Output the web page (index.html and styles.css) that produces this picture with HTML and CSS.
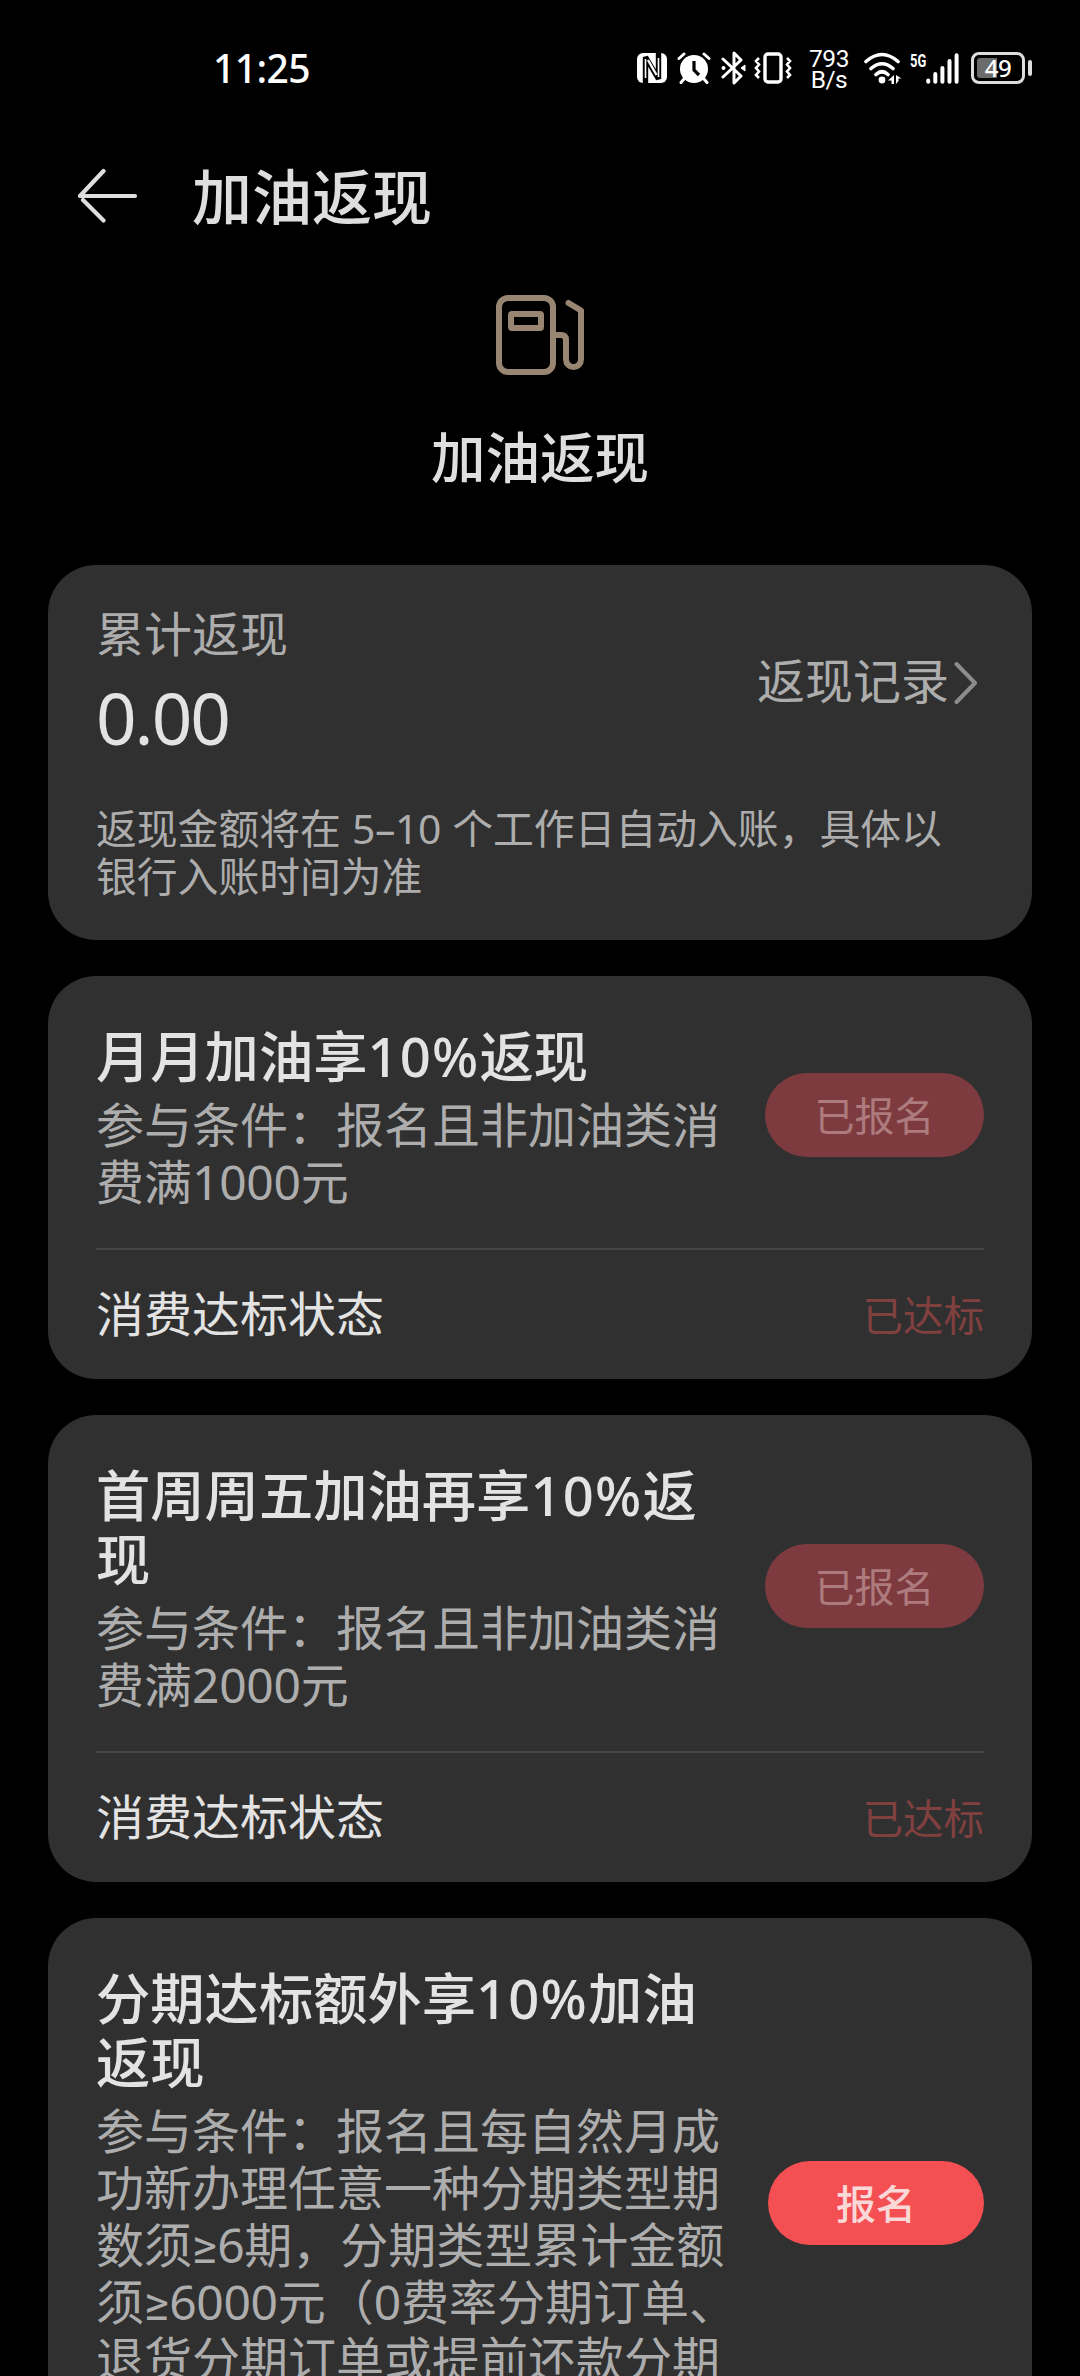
FILE: index.html
```html
<!DOCTYPE html>
<html lang="zh-CN">
<head>
<meta charset="utf-8">
<title>加油返现</title>
<link rel="stylesheet" href="styles.css">
</head>
<body>
<div class="screen">
  <div class="statusbar">
    <span class="clock">11:25</span>
    <div class="indicators">
      <svg class="nfc" width="30" height="32" viewBox="0 0 30 32"><rect x="0" y="1" width="30" height="30" rx="6" fill="#fff"/><path d="M8.500 31V5L21.500 27V1" fill="none" stroke="#000" stroke-width="5.400" stroke-linejoin="bevel"/><path d="M11 8L19.500 23" fill="none" stroke="#fff" stroke-width="2.400"/><path d="M8.500 26V7M21.500 25V6" stroke="#fff" stroke-width="1.600"/></svg>
      <svg class="alarm" width="34" height="32" viewBox="0 0 34 32"><circle cx="17" cy="17" r="14" fill="#fff"/><path d="M2 6.500L7 2M32 6.500L27 2M7 27L4 30.500M27 27L30 30.500" stroke="#fff" stroke-width="3" stroke-linecap="round"/><path d="M17 9v9l5 5" fill="none" stroke="#000" stroke-width="3.200"/></svg>
      <svg class="bluetooth" width="25" height="34" viewBox="0 0 25 34"><path d="M2 8l18 17-7 7V2l7 7L2 26" fill="none" stroke="#fff" stroke-width="3" stroke-linejoin="round" stroke-linecap="round"/><path d="M20 17l4-3v6z" fill="#fff" stroke="#fff"/><circle cx="2.500" cy="17" r="2" fill="#fff"/></svg>
      <svg class="vibrate" width="38" height="32" viewBox="0 0 38 32"><rect x="11" y="2" width="16" height="28" rx="3" fill="none" stroke="#fff" stroke-width="3.400"/><path d="M5 6L2 9l3 3.500-3 3.500 3 3.500-3 3.500 3 3M33 6l3 3-3 3.500 3 3.500-3 3.500 3 3.500-3 3" fill="none" stroke="#fff" stroke-width="2.600"/></svg>
      <span class="rate">793<br>B/s</span>
      <svg class="wifi" width="38" height="32" viewBox="0 0 38 32"><path d="M2 9.500Q18 -4.500 34 9.500M7 16.500Q18 7 29 16.500M12 22.500Q18 17 24 22.500" fill="none" stroke="#fff" stroke-width="3.600" stroke-linecap="round"/><circle cx="18" cy="28" r="3.400" fill="#fff"/><path d="M30 23v9h-2.500v-3.500H24zM32 32v-9l5.500 3.500H34.500V29z" fill="#fff"/></svg>
      <div class="cell">
        <span class="gen">5G</span>
        <svg class="bars" width="33" height="31" viewBox="0 0 33 31"><path d="M2.200 27.500v1.300M9.300 21v7.800M16.400 15v13.800M23.500 8v20.800M30.600 2.200v26.600" stroke="#fff" stroke-width="4" stroke-linecap="round"/></svg>
      </div>
      <div class="battery"><div class="case"><div class="level"></div><span class="percent">49</span></div><div class="tip"></div></div>
    </div>
  </div>

  <header class="titlebar">
    <svg class="back" width="60" height="56" viewBox="0 0 60 56"><path d="M57 28H2L25.500 3M5 32L25.500 52.500" fill="none" stroke="#dedede" stroke-width="4.200" stroke-linecap="round" stroke-linejoin="round"/></svg>
    <h1 class="title">加油返现</h1>
  </header>

  <section class="hero">
    <svg class="pump" width="88" height="80" viewBox="0 0 88 80"><g fill="none" stroke="#998672" stroke-width="6"><rect x="3" y="3" width="54" height="74" rx="9"/><rect x="15" y="19" width="30" height="14" rx="1"/><path d="M60 40H65Q70 40 70 45V64.500A7.500 7.500 0 0 0 85 64.500V15.500L72.500 8" stroke-linejoin="round" stroke-linecap="round"/></g></svg>
    <p class="hero-name">加油返现</p>
  </section>

  <main class="cards">
    <section class="card total">
      <div class="total-row">
        <div>
          <p class="label">累计返现</p>
          <p class="amount">0.00</p>
        </div>
        <a class="records">返现记录<svg class="chevron" width="24" height="44" viewBox="0 0 24 44"><path d="M2.500 3L21 22 2.500 41" fill="none" stroke="#8c8c8c" stroke-width="4" stroke-linecap="round" stroke-linejoin="round"/></svg></a>
      </div>
      <p class="note">返现金额将在 <span class="num">5–10</span> 个工作日自动入账，具体以<br>银行入账时间为准</p>
    </section>

    <section class="card offer">
      <div class="info">
        <div class="detail">
          <h2 class="name">月月加油享<span class="num">10%</span>返现</h2>
          <p class="terms">参与条件：报名且非加油类消<br>费满<span class="num">1000</span>元</p>
        </div>
        <button class="btn done">已报名</button>
      </div>
      <div class="state"><span class="key">消费达标状态</span><span class="reached">已达标</span></div>
    </section>

    <section class="card offer">
      <div class="info">
        <div class="detail">
          <h2 class="name">首周周五加油再享<span class="num">10%</span>返<br>现</h2>
          <p class="terms">参与条件：报名且非加油类消<br>费满<span class="num">2000</span>元</p>
        </div>
        <button class="btn done">已报名</button>
      </div>
      <div class="state"><span class="key">消费达标状态</span><span class="reached">已达标</span></div>
    </section>

    <section class="card offer long">
      <div class="info">
        <div class="detail">
          <h2 class="name">分期达标额外享<span class="num">10%</span>加油<br>返现</h2>
          <p class="terms">参与条件：报名且每自然月成<br>功新办理任意一种分期类型期<br>数须<span class="sign">≥</span><span class="num">6</span>期，分期类型累计金额<br>须<span class="sign">≥</span><span class="num">6000</span>元（<span class="num">0</span>费率分期订单、<br>退货分期订单或提前还款分期</p>
        </div>
        <button class="btn">报名</button>
      </div>
    </section>
  </main>
</div>
</body>
</html>
```
FILE: styles.css
```css
* { box-sizing: border-box; margin: 0; padding: 0; }

body {
  background: #000;
  color: #dedede;
  font-family: "Noto Sans CJK SC", sans-serif;
}

svg { display: block; flex: none; }

.num { font-family: "Noto Sans", "Noto Sans CJK SC", sans-serif; line-height: 1; letter-spacing: -0.3px; }
.sign { font-family: Roboto, "Liberation Sans", sans-serif; line-height: 1; }

.screen {
  width: 1080px;
  height: 2376px;
  overflow: hidden;
  display: flex;
  flex-direction: column;
}

/* status bar */
.statusbar {
  height: 136px;
  flex: none;
  padding: 0 48px 0 213px;
  display: flex;
  justify-content: space-between;
  align-items: center;
  color: #fff;
}
.clock { font: 500 39px/48px "Noto Sans", sans-serif; letter-spacing: -0.6px; }
.indicators { display: flex; align-items: center; }
.alarm { margin-left: 10px; }
.bluetooth { margin-left: 10px; }
.vibrate { margin-left: 8px; }
.rate {
  width: 44px;
  margin-left: 15px;
  padding-top: 1px;
  text-align: center;
  font: 400 24.5px/21px Roboto, sans-serif;
  letter-spacing: -0.5px;
}
.wifi { margin-left: 13px; }
.cell { display: flex; align-items: flex-start; margin-left: 8px; }
.gen {
  width: 16px;
  font: 700 19px/15px Roboto, sans-serif;
  transform: scaleX(0.68);
  transform-origin: left;
}
.battery { display: flex; align-items: center; gap: 3px; margin-left: 12px; }
.case {
  width: 54px;
  height: 32px;
  padding: 3px;
  border: 3px solid #ddd;
  border-radius: 8px;
  position: relative;
}
.level { width: 20px; height: 20px; border-radius: 3px 0 0 3px; background: #6b6b6b; }
.percent {
  position: absolute;
  inset: 0;
  text-align: center;
  font: 500 24px/26px "Noto Sans", sans-serif;
  letter-spacing: -0.5px;
}
.tip { width: 4px; height: 16px; border-radius: 2px; background: #ddd; }

/* title bar */
.titlebar {
  height: 120px;
  flex: none;
  padding-left: 78px;
  display: flex;
  align-items: center;
}
.title { margin: -5px 0 0 54px; font-size: 60px; line-height: 80px; font-weight: 500; }

/* hero */
.hero { height: 309px; flex: none; padding-top: 39px; display: flex; flex-direction: column; align-items: center; }
.hero-name { margin-top: 40px; font-size: 54.5px; line-height: 80px; font-weight: 500; }

/* cards */
.cards { padding: 0 48px; display: flex; flex-direction: column; gap: 36px; }
.card { flex: none; padding: 48px; border-radius: 48px; background: #303030; }

.total { height: 375px; padding-top: 36px; color: #adadad; }
.total-row { display: flex; justify-content: space-between; align-items: center; }
.label { font-size: 48px; line-height: 60px; }
.amount {
  margin-top: 12px;
  font: 400 71px/90px "Noto Sans", sans-serif;
  letter-spacing: -2px;
  color: #e3e3e3;
}
.records { display: flex; align-items: center; margin: -8px 6px 0 0; font-size: 48px; line-height: 60px; }
.chevron { margin: 9px 0 0 5px; }
.note { margin-top: 40px; font-size: 40.8px; line-height: 48px; white-space: nowrap; }
.note .num { margin: 0 2px; }

.offer .info { display: flex; justify-content: space-between; align-items: center; padding-bottom: 38px; }
.detail { margin-top: -2px; padding-bottom: 2px; }
.name { font-size: 54.3px; line-height: 64px; font-weight: 500; color: #e3e3e3; white-space: nowrap; }
.name .num { letter-spacing: 1.2px; }
.terms { margin-top: 8px; font-size: 48px; line-height: 57px; color: #adadad; white-space: nowrap; }
.btn {
  width: 216px;
  height: 84px;
  flex: none;
  padding-bottom: 2px;
  border: 0;
  border-radius: 42px;
  background: #f44f52;
  color: #fbd8d8;
  font: 500 40px/82px "Noto Sans CJK SC", sans-serif;
}
.done { width: 219px; margin-bottom: 4px; background: #7e3b3f; color: #ad7b7d; font-weight: 400; }
.state {
  height: 131px;
  margin-bottom: -48px;
  border-top: 2px solid #464646;
  display: flex;
  justify-content: space-between;
  align-items: center;
  font-size: 48px;
  color: #e3e3e3;
}
.key { padding-bottom: 8px; }
.reached { padding-bottom: 2px; font-size: 40.5px; color: #80403f; }
.long { height: 640px; }
.long .info { height: 478px; padding-bottom: 0; align-items: flex-start; }
.long .btn { margin-top: 195px; }
```
